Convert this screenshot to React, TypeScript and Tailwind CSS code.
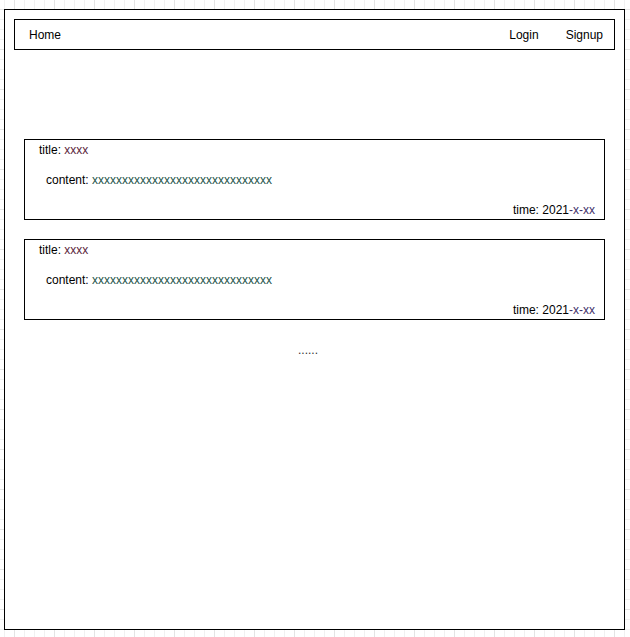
import React from 'react';

const posts = [
    { title: "xxxx", content: "xxxxxxxxxxxxxxxxxxxxxxxxxxxxxx", time: "2021-x-xx" },
    { title: "xxxx", content: "xxxxxxxxxxxxxxxxxxxxxxxxxxxxxx", time: "2021-x-xx" },
];

const PostCard = ({ title, content, time }: { title: string, content: string, time: string }) => (
    <div className="w-[581px] h-[81px] border border-black bg-white flex flex-col text-[12px] leading-[14px] text-black">
        <div className="pl-[14px] pt-[3px]">
            title: <span className="text-[#5c1f3c]">{title}</span>
        </div>
        <div className="pl-[21px] mt-[16px]">
            content: <span className="text-[#24544a]">{content}</span>
        </div>
        <div className="self-end pr-[9px] mt-[16px]">
            time: 2021<span className="text-[#43306a]">{time.slice(4)}</span>
        </div>
    </div>
);

export default function App() {
    return (
        <div
            className="w-[630px] h-[637px] overflow-hidden pt-[9px] pl-[4px] font-['Liberation_Sans',Arial,sans-serif] bg-white bg-[linear-gradient(to_right,#e4e4e4_1px,transparent_1px),linear-gradient(to_bottom,#e4e4e4_1px,transparent_1px),linear-gradient(to_right,#f1f1f1_1px,transparent_1px),linear-gradient(to_bottom,#f1f1f1_1px,transparent_1px)] bg-[size:40px_40px,40px_40px,10px_10px,10px_10px] bg-[position:14px_9px,14px_9px,4px_9px,4px_9px]"
        >
            {/* Page frame */}
            <div className="w-[621px] h-[621px] border border-black bg-white pt-[9px] pl-[9px]">

                {/* Nav */}
                <nav className="w-[601px] h-[31px] border border-black flex items-center text-[12px] text-black">
                    <span className="pl-[14px] pt-[1px]">Home</span>
                    <div className="ml-auto flex items-center gap-[27px] pr-[11px] pt-[1px]">
                        <span>Login</span>
                        <span>Signup</span>
                    </div>
                </nav>

                {/* Posts */}
                <div className="flex flex-col gap-[19px] mt-[89px] pl-[10px]">
                    {posts.map((p, i) => (
                        <PostCard key={i} {...p} />
                    ))}
                </div>

                <div className="w-[588px] text-center text-[12px] leading-[12px] mt-[24px] text-[#333]">......</div>
            </div>
        </div>
    );
}
